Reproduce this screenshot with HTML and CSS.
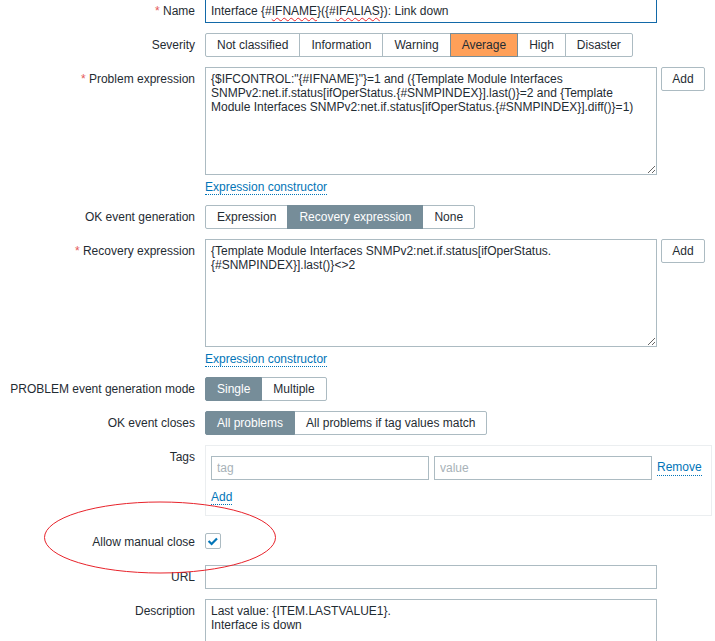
FILE: index.html
```html
<!DOCTYPE html>
<html lang="en">
<head>
<meta charset="utf-8">
<title>Trigger prototype</title>
<link rel="stylesheet" href="styles.css">
</head>
<body>
<ul class="form">
  <li class="row">
    <div class="label"><span class="req">*</span> Name</div>
    <div class="field">
      <div class="text-input focused">Interface {#<span class="spell">IFNAME</span>}({#<span class="spell">IFALIAS</span>}): Link down</div>
    </div>
  </li>
  <li class="row">
    <div class="label">Severity</div>
    <div class="field seg">
      <span class="seg-btn">Not classified</span><span class="seg-btn">Information</span><span class="seg-btn">Warning</span><span class="seg-btn avg">Average</span><span class="seg-btn">High</span><span class="seg-btn">Disaster</span>
    </div>
  </li>
  <li class="row">
    <div class="label"><span class="req">*</span> Problem expression</div>
    <div class="field">
      <div class="expr">
        <textarea class="area" spellcheck="false">{$IFCONTROL:"{#IFNAME}"}=1 and ({Template Module Interfaces SNMPv2:net.if.status[ifOperStatus.{#SNMPINDEX}].last()}=2 and {Template Module Interfaces SNMPv2:net.if.status[ifOperStatus.{#SNMPINDEX}].diff()}=1)</textarea>
        <button class="btn" type="button">Add</button>
      </div>
      <div class="below"><a class="link" href="#">Expression constructor</a></div>
    </div>
  </li>
  <li class="row">
    <div class="label">OK event generation</div>
    <div class="field seg">
      <span class="seg-btn">Expression</span><span class="seg-btn on">Recovery expression</span><span class="seg-btn">None</span>
    </div>
  </li>
  <li class="row">
    <div class="label"><span class="req">*</span> Recovery expression</div>
    <div class="field">
      <div class="expr">
        <textarea class="area" spellcheck="false">{Template Module Interfaces SNMPv2:net.if.status[ifOperStatus.{#SNMPINDEX}].last()}&lt;&gt;2</textarea>
        <button class="btn" type="button">Add</button>
      </div>
      <div class="below"><a class="link" href="#">Expression constructor</a></div>
    </div>
  </li>
  <li class="row">
    <div class="label">PROBLEM event generation mode</div>
    <div class="field seg">
      <span class="seg-btn on">Single</span><span class="seg-btn">Multiple</span>
    </div>
  </li>
  <li class="row">
    <div class="label">OK event closes</div>
    <div class="field seg">
      <span class="seg-btn on">All problems</span><span class="seg-btn">All problems if tag values match</span>
    </div>
  </li>
  <li class="row">
    <div class="label">Tags</div>
    <div class="field">
      <div class="tags">
        <div class="tag-row">
          <input class="small-input" type="text" placeholder="tag">
          <input class="small-input" type="text" placeholder="value">
          <a class="link" href="#">Remove</a>
        </div>
        <div class="tag-add"><a class="link" href="#">Add</a></div>
      </div>
    </div>
  </li>
  <li class="row row-check">
    <div class="label">Allow manual close</div>
    <div class="field">
      <span class="checkbox"><svg width="14" height="14" viewBox="0 0 14 14"><polyline points="2.6,7 5.6,10 11,4.4" fill="none" stroke="#0275b8" stroke-width="2.2"/></svg></span>
    </div>
  </li>
  <li class="row">
    <div class="label">URL</div>
    <div class="field">
      <input class="text-input" type="text">
    </div>
  </li>
  <li class="row">
    <div class="label">Description</div>
    <div class="field">
      <textarea class="area desc" spellcheck="false">Last value: {ITEM.LASTVALUE1}.
Interface is down</textarea>
    </div>
  </li>
</ul>
<svg class="annot" width="236" height="78" viewBox="0 0 236 78"><ellipse cx="117" cy="37.5" rx="115.5" ry="35.5" fill="none" stroke="#e8232b" stroke-width="1"/></svg>
</body>
</html>
```
FILE: styles.css
```css
* { box-sizing: border-box; }

body {
  margin: 0;
  background: #fff;
  color: #1f2c33;
  font-family: "Liberation Sans", Arial, sans-serif;
  font-size: 12px;
  line-height: 1.2;
}

.form {
  list-style: none;
  margin: -1px 0 0;
  padding: 0;
}

.row {
  display: flex;
  align-items: flex-start;
  margin-bottom: 10px;
}

.label {
  flex: none;
  width: 205px;
  padding-right: 10px;
  text-align: right;
  line-height: 24px;
  white-space: nowrap;
}

.req { color: #e45959; }

.field { flex: none; }

.text-input {
  display: block;
  width: 452px;
  height: 24px;
  margin: 0;
  padding: 0 5px;
  border: 1px solid #acbbc2;
  border-radius: 0;
  background: #fff;
  color: #1f2c33;
  font: inherit;
  line-height: 22px;
  outline: none;
}

.text-input.focused { border-color: #1269a8; }

.spell {
  text-decoration: underline wavy #e8232b;
  text-decoration-thickness: 1px;
  text-underline-offset: 2px;
}

.seg { display: flex; }

.seg-btn {
  position: relative;
  height: 24px;
  padding: 0 11px;
  margin-left: -1px;
  border: 1px solid #acbbc2;
  background: #fff;
  line-height: 22px;
  white-space: nowrap;
}

.seg-btn:first-child { margin-left: 0; border-radius: 2px 0 0 2px; }
.seg-btn:last-child { border-radius: 0 2px 2px 0; }

.seg-btn.on {
  z-index: 1;
  background: #768d99;
  border-color: #768d99;
  color: #fff;
}

.seg-btn.avg {
  z-index: 1;
  background: #ffa059;
  border-color: #768d99;
}

.expr {
  display: flex;
  align-items: flex-start;
  gap: 4px;
}

.area {
  display: block;
  width: 452px;
  height: 108px;
  margin: 0;
  padding: 4px 5px;
  border: 1px solid #acbbc2;
  border-radius: 0;
  background: #fff;
  color: #1f2c33;
  font-family: "Liberation Sans", Arial, sans-serif;
  font-size: 12px;
  line-height: 14px;
  outline: none;
  resize: vertical;
}

.btn {
  width: 44px;
  height: 24px;
  margin: 0;
  padding: 0;
  border: 1px solid #acbbc2;
  border-radius: 2px;
  background: #fff;
  color: #1f2c33;
  font: inherit;
  line-height: 22px;
}

.below {
  margin-top: 4px;
  line-height: 16px;
}

.link {
  color: #0275b8;
  text-decoration: none;
  border-bottom: 1px dotted #0275b8;
}

.tags {
  width: 507px;
  padding: 10px 5px;
  border: 1px solid #ebeef0;
}

.tag-row {
  display: flex;
  align-items: center;
  gap: 5px;
}

.small-input {
  width: 218px;
  height: 24px;
  margin: 0;
  padding: 0 5px;
  border: 1px solid #acbbc2;
  border-radius: 0;
  font: inherit;
  color: #1f2c33;
  outline: none;
}

.small-input::placeholder { color: #a8b2b8; }

.tag-add {
  margin-top: 9px;
  line-height: 16px;
}

.row-check { min-height: 29px; }
.row-check .label { padding-top: 4px; }

.checkbox {
  display: block;
  width: 16px;
  height: 16px;
  margin-top: 7px;
  border: 1px solid #acbbc2;
  border-radius: 2px;
  background: #fff;
}

.checkbox svg { display: block; }

.annot {
  position: absolute;
  left: 43px;
  top: 500px;
  pointer-events: none;
}
```
